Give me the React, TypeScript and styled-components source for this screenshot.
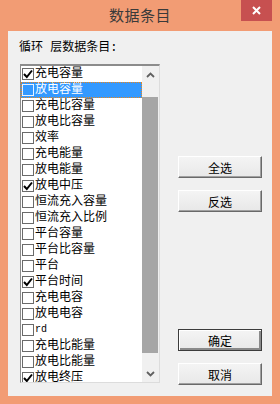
import styled, { createGlobalStyle } from 'styled-components';

const GlobalStyle = createGlobalStyle`
  html, body {
    margin: 0;
    padding: 0;
    background: #f29c74;
  }
  * {
    box-sizing: border-box;
  }
`;

const Window = styled.div`
  width: 280px;
  height: 404px;
  background: #f29c74;
  display: flex;
  flex-direction: column;
  padding: 0 8px 8px 8px;
  font-family: 'Liberation Mono', 'Noto Sans CJK SC', monospace;
  font-size: 12px;
  color: #000;
`;

const TitleBar = styled.div`
  position: relative;
  height: 31px;
  display: flex;
  justify-content: center;
  align-items: center;
  padding-bottom: 3px;
`;

const Title = styled.div`
  font-family: 'Noto Sans CJK SC', sans-serif;
  font-size: 15px;
  color: #3a3a3a;
  letter-spacing: 0.5px;
`;

const CloseButton = styled.div`
  position: absolute;
  top: 0;
  right: 0;
  width: 31px;
  height: 21px;
  background: #c75050;
  display: flex;
  align-items: center;
  justify-content: center;
`;

const Client = styled.div`
  flex: 1;
  background: #f0f0f0;
  display: flex;
  padding: 9px 10px 11px 12px;
  gap: 18px;
`;

const LeftCol = styled.div`
  display: flex;
  flex-direction: column;
  gap: 8px;
`;

const Label = styled.div`
  height: 16px;
  line-height: 16px;
  margin-left: -1px;
`;

const ListBox = styled.div`
  width: 140px;
  height: 319px;
  display: flex;
  background: #fff;
  border-top: 2px solid #8c8c8c;
  border-left: 1px solid #8c8c8c;
  border-right: 1px solid #dcdcdc;
  border-bottom: 1px solid #dcdcdc;
`;

const Items = styled.div`
  flex: 1;
  overflow: hidden;
`;

const Row = styled.div<{ selected?: boolean }>`
  height: 16px;
  display: flex;
  align-items: center;
  padding-left: 1px;
  line-height: 16px;
  white-space: nowrap;
  background: ${(p) => (p.selected ? '#3399ff' : 'transparent')};
  color: ${(p) => (p.selected ? '#fff' : '#000')};
  outline: ${(p) => (p.selected ? '1px dotted #e8861c' : 'none')};
  outline-offset: -1px;
`;

const Box = styled.div<{ selected?: boolean }>`
  width: 12px;
  height: 12px;
  flex: none;
  border: 1px solid ${(p) => (p.selected ? '#e8f2ff' : '#6a6a6a')};
  background: ${(p) => (p.selected ? 'transparent' : '#fff')};
  display: flex;
  align-items: center;
  justify-content: center;
  margin-right: 1px;
`;

const ItemText = styled.span<{ latin?: boolean }>`
  font-size: ${(p) => (p.latin ? '10px' : '12px')};
`;

const ScrollBar = styled.div`
  width: 17px;
  display: flex;
  flex-direction: column;
  background: #f0f0f0;
`;

const ArrowButton = styled.div`
  height: 17px;
  flex: none;
  display: flex;
  align-items: center;
  justify-content: center;
`;

const Track = styled.div`
  flex: 1;
  display: flex;
  padding: 14px 1px 12px 0;
`;

const Thumb = styled.div`
  flex: 1;
  background: #a6a6a6;
`;

const RightCol = styled.div`
  margin-top: 116px;
  display: flex;
  flex-direction: column;
  justify-content: space-between;
`;

const ButtonGroup = styled.div`
  display: flex;
  flex-direction: column;
  gap: 12px;
`;

const Button = styled.div<{ isDefault?: boolean }>`
  width: 84px;
  height: 22px;
  display: flex;
  align-items: center;
  justify-content: center;
  font-family: 'Noto Sans CJK SC', sans-serif;
  font-size: 12px;
  background: linear-gradient(#f4f4f4, #e8e8e8);
  border: 1px solid ${(p) => (p.isDefault ? '#3c3c3c' : '#fff')};
  border-right-color: ${(p) => (p.isDefault ? '#3c3c3c' : '#696969')};
  border-bottom-color: ${(p) => (p.isDefault ? '#3c3c3c' : '#696969')};
  box-shadow: ${(p) =>
    p.isDefault
      ? 'inset 1px 1px #fff, inset -2px -2px #8a8a8a'
      : 'inset -1px -1px #a0a0a0'};
`;

const items: [string, boolean][] = [
  ['充电容量', true],
  ['放电容量', false],
  ['充电比容量', false],
  ['放电比容量', false],
  ['效率', false],
  ['充电能量', false],
  ['放电能量', false],
  ['放电中压', true],
  ['恒流充入容量', false],
  ['恒流充入比例', false],
  ['平台容量', false],
  ['平台比容量', false],
  ['平台', false],
  ['平台时间', true],
  ['充电电容', false],
  ['放电电容', false],
  ['rd', false],
  ['充电比能量', false],
  ['放电比能量', false],
  ['放电终压', true],
];

function Check() {
  return (
    <svg width="10" height="10" viewBox="0 0 10 10">
      <path d="M1 5 L3.8 8 L9 1.5" fill="none" stroke="#000" strokeWidth="2" />
    </svg>
  );
}

function Chevron({ down }: { down?: boolean }) {
  return (
    <svg width="9" height="6" viewBox="0 0 9 6">
      <path
        d={down ? 'M1 1 L4.5 4.5 L8 1' : 'M1 5 L4.5 1.5 L8 5'}
        fill="none"
        stroke="#606060"
        strokeWidth="1.8"
      />
    </svg>
  );
}

export default function App() {
  return (
    <>
      <GlobalStyle />
      <Window>
        <TitleBar>
          <Title>数据条目</Title>
          <CloseButton>
            <svg width="9" height="9" viewBox="0 0 9 9">
              <path d="M1 1 L8 8 M8 1 L1 8" stroke="#fff" strokeWidth="2" />
            </svg>
          </CloseButton>
        </TitleBar>
        <Client>
          <LeftCol>
            <Label>循环 层数据条目:</Label>
            <ListBox>
              <Items>
                {items.map(([name, checked], i) => (
                  <Row key={name} selected={i === 1}>
                    <Box selected={i === 1}>{checked && <Check />}</Box>
                    <ItemText latin={name === 'rd'}>{name}</ItemText>
                  </Row>
                ))}
              </Items>
              <ScrollBar>
                <ArrowButton>
                  <Chevron />
                </ArrowButton>
                <Track>
                  <Thumb />
                </Track>
                <ArrowButton>
                  <Chevron down />
                </ArrowButton>
              </ScrollBar>
            </ListBox>
          </LeftCol>
          <RightCol>
            <ButtonGroup>
              <Button>全选</Button>
              <Button>反选</Button>
            </ButtonGroup>
            <ButtonGroup>
              <Button isDefault>确定</Button>
              <Button>取消</Button>
            </ButtonGroup>
          </RightCol>
        </Client>
      </Window>
    </>
  );
}
